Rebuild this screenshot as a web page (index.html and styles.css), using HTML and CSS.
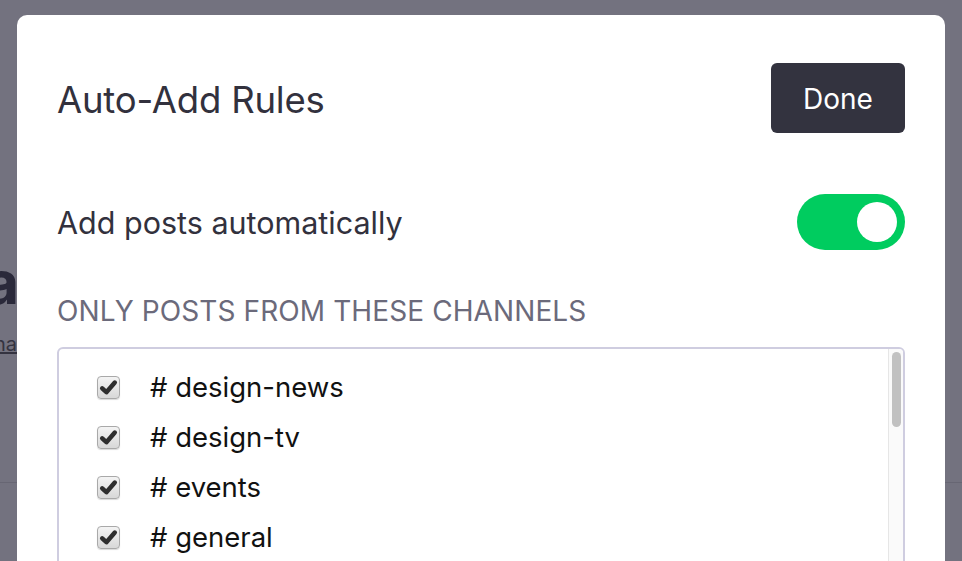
FILE: index.html
```html
<!DOCTYPE html>
<html lang="en">
<head>
    <meta charset="UTF-8">
    <meta name="viewport" content="width=device-width, initial-scale=1.0">
    <title>Auto-Add Rules</title>
    <link rel="stylesheet" href="styles.css">
</head>
<body>
    <!-- page behind the overlay -->
    <div class="page">
        <div class="page-title">la</div>
        <a class="page-link" href="#">ha</a>
        <div class="page-rule"></div>
    </div>

    <div class="overlay">
        <div class="modal">
            <div class="modal-head">
                <h1>Auto-Add Rules</h1>
                <button class="btn-done">Done</button>
            </div>

            <div class="setting">
                <span>Add posts automatically</span>
                <div class="toggle on"><div class="knob"></div></div>
            </div>

            <div class="section-label">ONLY POSTS FROM THESE CHANNELS</div>

            <div class="channel-box">
                <ul class="channels">
                    <li><span class="check"><svg viewBox="0 0 16 16"><path d="M3.2 8.6 L6.4 11.6 L12.8 4.2" /></svg></span># design-news</li>
                    <li><span class="check"><svg viewBox="0 0 16 16"><path d="M3.2 8.6 L6.4 11.6 L12.8 4.2" /></svg></span># design-tv</li>
                    <li><span class="check"><svg viewBox="0 0 16 16"><path d="M3.2 8.6 L6.4 11.6 L12.8 4.2" /></svg></span># events</li>
                    <li><span class="check"><svg viewBox="0 0 16 16"><path d="M3.2 8.6 L6.4 11.6 L12.8 4.2" /></svg></span># general</li>
                </ul>
                <div class="scroll-track"><div class="scroll-thumb"></div></div>
            </div>
        </div>
    </div>
</body>
</html>
```

FILE: styles.css
```css
body {
    margin: 0;
    font-family: Inter, "Noto Sans", sans-serif;
    overflow: hidden;
    height: 561px;
    background: #fff;
}

/* Page underneath */
.page {
    padding-top: 252px;
}

.page-title {
    font-size: 60px;
    font-weight: 700;
    color: #3a3a44;
    margin-left: -32px;
    line-height: 60px;
}

.page-link {
    display: block;
    margin-left: -6px;
    margin-top: 20px;
    font-size: 20px;
    color: #555;
}

.page-rule {
    margin-top: 126px;
    border-top: 1px solid #ddd;
}

/* Dark overlay */
.overlay {
    position: fixed;
    inset: 0;
    background: rgba(34, 32, 52, 0.63);
    padding: 15px 17px 0;
}

.modal {
    background: #fff;
    border-radius: 10px 10px 0 0;
    height: 600px;
    padding: 48px 40px 0;
    color: #32313d;
}

.modal-head {
    display: flex;
    justify-content: space-between;
    align-items: center;
}

.modal-head h1 {
    margin: 0;
    padding-top: 4px;
    font-size: 36.5px;
    font-weight: 400;
    letter-spacing: -0.2px;
}

.btn-done {
    width: 134px;
    height: 70px;
    border: none;
    border-radius: 6px;
    background: #33333f;
    color: #fff;
    font-family: inherit;
    font-size: 28px;
    padding-top: 3px;
}

/* Toggle row */
.setting {
    display: flex;
    justify-content: space-between;
    align-items: center;
    margin-top: 61px;
    font-size: 30.5px;
}

.toggle {
    width: 108px;
    height: 56px;
    border-radius: 28px;
    background: #ccc;
    display: flex;
    align-items: center;
    padding: 0 8px;
    box-sizing: border-box;
}

.toggle.on {
    background: #00cc5f;
    justify-content: flex-end;
}

.knob {
    width: 40px;
    height: 40px;
    border-radius: 50%;
    background: #fff;
}

.section-label {
    margin-top: 44px;
    font-size: 28px;
    color: #6b6a7b;
    letter-spacing: 0.1px;
}

/* Channel list */
.channel-box {
    margin-top: 19px;
    border: 2px solid #cfcde0;
    border-radius: 6px;
    display: flex;
    height: 240px;
    overflow: hidden;
}

.channels {
    list-style: none;
    margin: 0;
    padding: 13px 0 0 38px;
    flex: 1;
}

.channels li {
    display: flex;
    align-items: center;
    height: 50px;
    font-size: 27.5px;
    color: #111;
}

.check {
    width: 23px;
    height: 23px;
    margin-right: 30px;
    border: 1px solid #a9a9a9;
    border-radius: 4px;
    background: linear-gradient(#f4f4f4, #d8d8d8);
    flex-shrink: 0;
    display: flex;
    box-sizing: border-box;
    box-shadow: 0 1px 1px rgba(0, 0, 0, 0.15);
}

.check svg {
    width: 21px;
    height: 21px;
}

.check path {
    fill: none;
    stroke: #2e2e2e;
    stroke-width: 3.4;
    stroke-linecap: round;
    stroke-linejoin: round;
}

.scroll-track {
    width: 15px;
    background: #fafafa;
    border-left: 1px solid #e6e6e6;
    padding: 3px 0 0 3px;
    box-sizing: border-box;
}

.scroll-thumb {
    width: 9px;
    height: 75px;
    border-radius: 5px;
    background: #c1c1c1;
}
```
